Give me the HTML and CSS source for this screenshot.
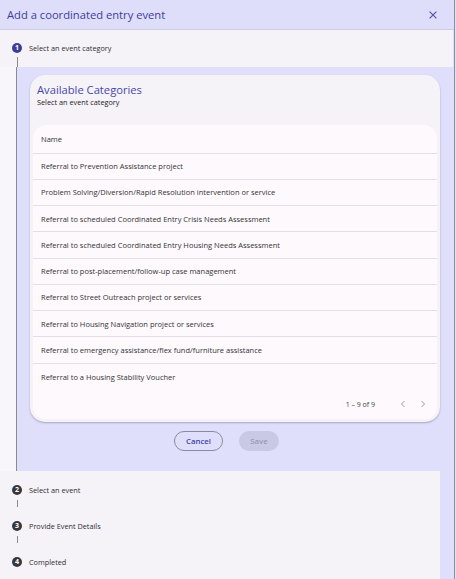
FILE: index.html
```html
<!DOCTYPE html>
<html>
<head>
<meta charset="utf-8">
<link rel="stylesheet" href="styles.css">
</head>
<body>
<div class="dialog">
  <div class="header">
    <div class="title">Add a coordinated entry event</div>
    <svg class="close" width="8" height="8" viewBox="0 0 8 8"><path d="M0.6 0.6 L7.4 7.4 M7.4 0.6 L0.6 7.4" stroke="#5050a8" stroke-width="1.1" fill="none"/></svg>
  </div>
  <div class="step-head active">
    <div class="marker"><span class="num">1</span><span class="tail"></span></div>
    <div class="label">Select an event category</div>
  </div>
  <div class="step-body">
    <div class="content">
      <div class="card">
        <div class="card-title">Available Categories</div>
        <div class="card-sub">Select an event category</div>
        <div class="table">
          <div class="row head">Name</div>
          <div class="row">Referral to Prevention Assistance project</div>
          <div class="row">Problem Solving/Diversion/Rapid Resolution intervention or service</div>
          <div class="row">Referral to scheduled Coordinated Entry Crisis Needs Assessment</div>
          <div class="row">Referral to scheduled Coordinated Entry Housing Needs Assessment</div>
          <div class="row">Referral to post-placement/follow-up case management</div>
          <div class="row">Referral to Street Outreach project or services</div>
          <div class="row">Referral to Housing Navigation project or services</div>
          <div class="row">Referral to emergency assistance/flex fund/furniture assistance</div>
          <div class="row last">Referral to a Housing Stability Voucher</div>
          <div class="pager">
            <span class="range">1 – 9 of 9</span>
            <svg class="chev" width="8" height="8" viewBox="0 0 8 8"><path d="M5.5 1 L2.5 4 L5.5 7" stroke="#9a98a0" stroke-width="1" fill="none"/></svg>
            <svg class="chev" width="8" height="8" viewBox="0 0 8 8"><path d="M2.5 1 L5.5 4 L2.5 7" stroke="#9a98a0" stroke-width="1" fill="none"/></svg>
          </div>
        </div>
      </div>
      <div class="actions">
        <button class="btn cancel">Cancel</button>
        <button class="btn save">Save</button>
      </div>
    </div>
  </div>
  <div class="rest">
    <div class="step">
      <div class="marker"><span class="num dark">2</span><span class="link"></span></div>
      <div class="label">Select an event</div>
    </div>
    <div class="step">
      <div class="marker"><span class="num dark">3</span><span class="link"></span></div>
      <div class="label">Provide Event Details</div>
    </div>
    <div class="step">
      <div class="marker"><span class="num dark">4</span></div>
      <div class="label">Completed</div>
    </div>
  </div>
</div>
</body>
</html>
```

FILE: styles.css
```css
* { box-sizing: border-box; }
html, body { margin: 0; padding: 0; }
body {
  background: #dfdffc;
  font-family: "Open Sans", "Noto Sans", sans-serif;
  width: 456px;
  height: 579px;
  overflow: hidden;
}
.dialog {
  width: 455px;
  height: 579px;
  border-right: 1px solid #8e8e9c;
  overflow: hidden;
}
.header {
  height: 30px;
  border-bottom: 1px solid #cdcde6;
  background: #dedefb;
  display: flex;
  align-items: center;
  justify-content: space-between;
  padding: 0 17px 0 7px;
}
.title {
  font-size: 11.2px;
  color: #3d3d98;
}
.close { display: block; }
.step-head {
  width: 453px;
  height: 37px;
  background: #f5f3f7;
  display: flex;
  padding: 13px 0 0 12px;
}
.marker {
  width: 10px;
  display: flex;
  flex-direction: column;
  align-items: center;
  flex: none;
}
.num {
  width: 10px;
  height: 10px;
  border-radius: 50%;
  background: #3d3d98;
  color: #fff;
  font-size: 7px;
  font-weight: 700;
  line-height: 10px;
  text-align: center;
  flex: none;
}
.num.dark { background: #38383c; }
.tail {
  width: 1px;
  flex: 1;
  margin-top: 4px;
  background: #8a8a92;
}
.label {
  font-size: 7.3px;
  color: #2e2e33;
  margin-left: 7px;
  line-height: 10px;
}
.step-body {
  background: #f9f6fa;
  height: 404px;
}
.content {
  margin-left: 16px;
  border-left: 1px solid #8a8a92;
  background: #dfdffc;
  height: 404px;
  padding: 8px 14px 0 13px;
}
.card {
  background: #f6f3f8;
  border-radius: 15px;
  padding: 7px 3px 3px 3px;
  height: 347px;
  box-shadow: 0 1px 2px rgba(60, 60, 90, 0.35);
  display: flex;
  flex-direction: column;
}
.card-title {
  font-size: 11.2px;
  line-height: 15px;
  color: #4646a6;
  padding-left: 4px;
}
.card-sub {
  font-size: 7.3px;
  line-height: 10px;
  color: #222;
  padding-left: 4px;
  margin-bottom: 18px;
}
.table {
  background: #fdf9fd;
  border-radius: 14px 14px 12px 12px;
  flex: 1;
  display: flex;
  flex-direction: column;
}
.row {
  height: 26.25px;
  border-bottom: 1px solid #e3dfe6;
  font-size: 7.5px;
  color: #333;
  display: flex;
  align-items: center;
  padding-left: 8px;
}
.row.head { height: 28.5px; border-bottom-width: 1.5px; }
.row.last { border-bottom: none; }
.pager {
  flex: 1;
  display: flex;
  align-items: center;
  justify-content: flex-end;
  padding-right: 10px;
  font-size: 7px;
  color: #444;
}
.range { margin-right: 24px; }
.chev { display: block; margin-left: 12px; }
.chev:first-of-type { margin-left: 0; }
.actions {
  display: flex;
  justify-content: center;
  gap: 16px;
  margin-top: 9px;
  padding-right: 17px;
}
.btn {
  font-family: "Open Sans", "Noto Sans", sans-serif;
  font-size: 7.8px;
  font-weight: 600;
  height: 20px;
  border-radius: 10px;
  padding: 0;
}
.cancel {
  width: 49px;
  border: 1px solid #8a8aa2;
  background: transparent;
  color: #4444a4;
}
.save {
  width: 40px;
  border: none;
  background: #c9c9e6;
  color: #9a9ab4;
}
.rest {
  width: 440px;
  height: 108px;
  background: #f5f3f7;
  padding: 14px 0 0 12px;
}
.step {
  display: flex;
}
.step .marker { height: 36px; }
.link {
  width: 1px;
  height: 7px;
  margin-top: 5px;
  background: #8a8a92;
}
```
